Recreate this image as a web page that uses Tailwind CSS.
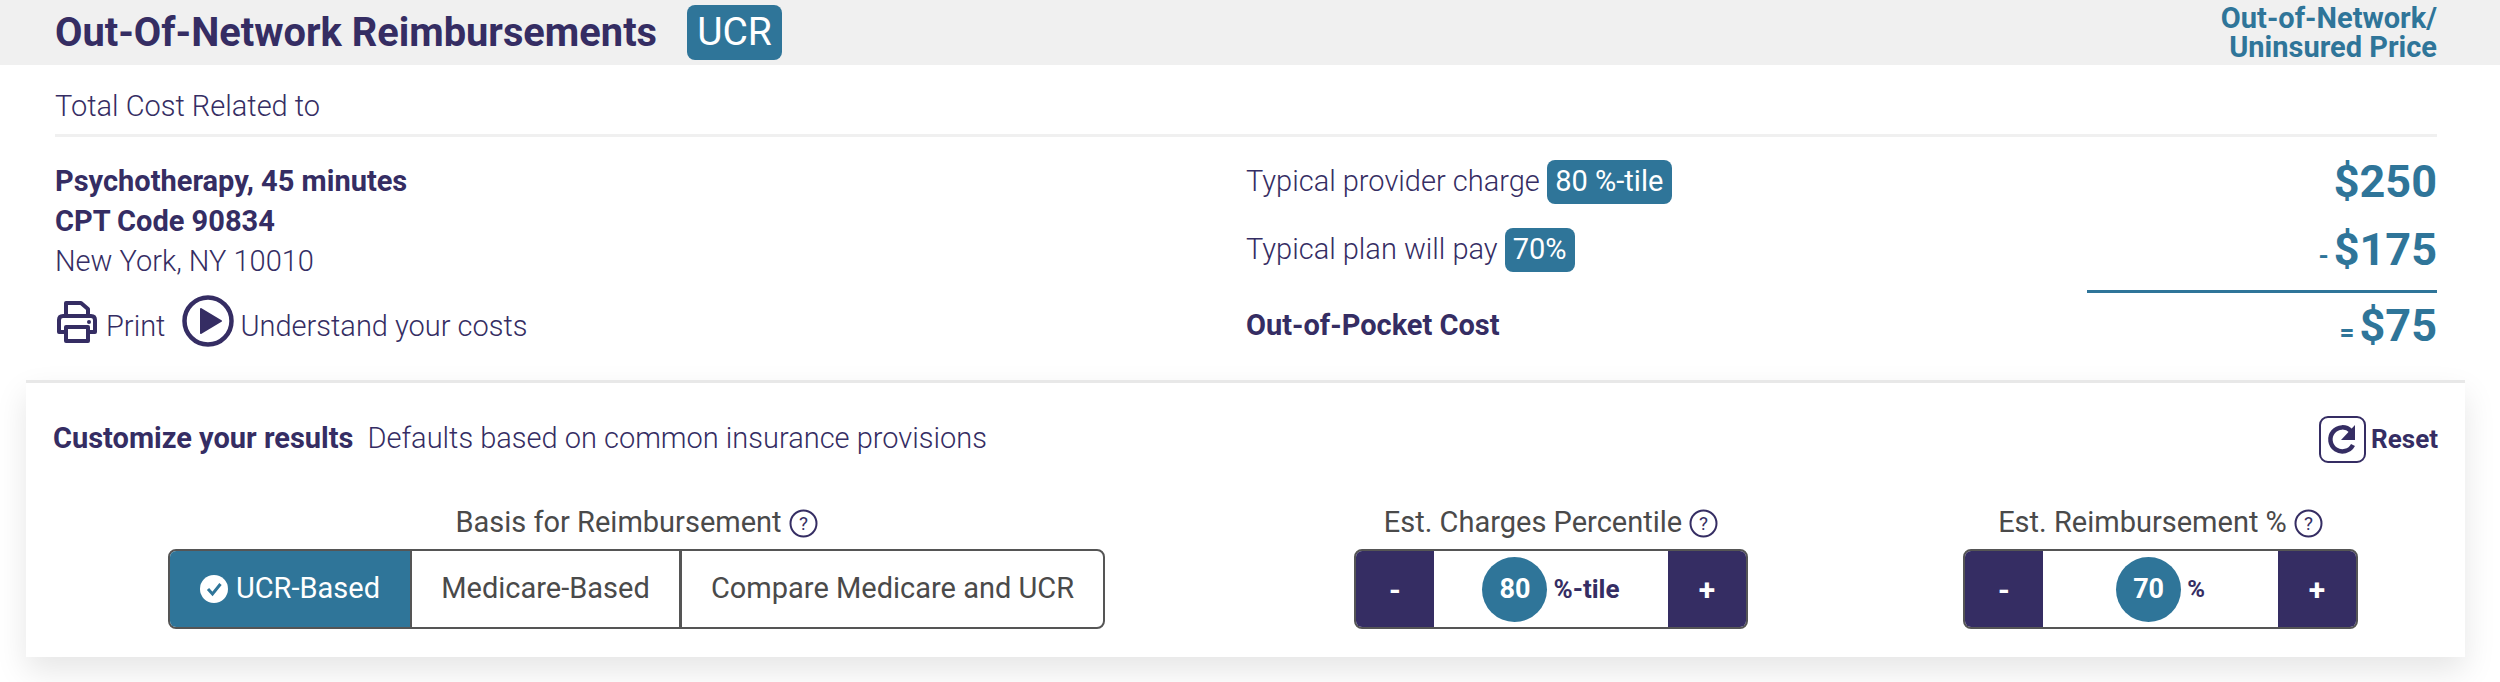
<!DOCTYPE html>
<html lang="en">
  <head>
    <meta charset="UTF-8" />
    <title>Out-Of-Network Reimbursements</title>
    <script src="https://cdn.jsdelivr.net/npm/@tailwindcss/browser@4"></script>
  </head>
  <body class="bg-white font-['Roboto',sans-serif] text-[#352d63] overflow-hidden">
    <!-- header bar -->
    <div class="h-[65px] bg-[#f0f0f0] pl-[55px] pr-[63px] flex items-center justify-between">
      <div class="flex items-center">
        <h1 class="text-[39.8px] leading-none font-bold">Out-Of-Network Reimbursements</h1>
        <span class="ml-[30px] w-[95px] h-[55px] bg-[#2f7599] text-white text-[39px] rounded-lg flex items-center justify-center">UCR</span>
      </div>
      <div class="text-[#2f7599] text-[29px] leading-[29px] font-bold text-right">Out-of-Network/<br />Uninsured Price</div>
    </div>

    <div class="pl-[55px] pr-[63px]">
      <div class="h-[72px] border-b-[3px] border-[#f0f0f0] text-[29px] font-light flex items-center pt-[14px]">Total Cost Related to</div>
      <div class="flex">
        <!-- procedure -->
        <div class="w-[1191px] pt-[24px]">
          <div class="text-[29px] leading-[40px] font-bold">Psychotherapy, 45 minutes</div>
          <div class="text-[29px] leading-[40px] font-bold">CPT Code 90834</div>
          <div class="text-[29px] leading-[40px] font-light">New York, NY 10010</div>
          <div class="flex items-center mt-[20px] text-[29px] font-light">
            <svg class="w-[44px] h-[44px] -translate-y-[6px]" viewBox="0 0 44 44" fill="none" stroke="#352d63" stroke-width="4" stroke-linejoin="round">
              <path d="M11 17V4h15l7 6v7" />
              <path d="M11 33H4V21q0-4 4-4h28q4 0 4 4v12h-7" />
              <path d="M11 28h22v14H11z" />
              <circle cx="34" cy="23" r="2" fill="#352d63" stroke="none" />
            </svg>
            <span class="ml-[7px]">Print</span>
            <svg class="ml-[17px] w-[52px] h-[52px] -translate-y-[6px]" viewBox="0 0 52 52" fill="none">
              <circle cx="26" cy="26" r="23.5" stroke="#352d63" stroke-width="4.500" />
              <path d="M19 14l20 12-20 12z" fill="#352d63" stroke="#352d63" stroke-width="2" stroke-linejoin="round" />
            </svg>
            <span class="ml-[6px]">Understand your costs</span>
          </div>
        </div>
        <!-- costs -->
        <div class="flex-1 pt-[23px]">
          <div class="h-[44px] flex items-center justify-between">
            <div class="flex items-center text-[29px] font-light">Typical provider charge
              <span class="ml-[7px] w-[125px] h-[44px] bg-[#2f7599] text-white text-[29px] font-normal rounded-lg flex items-center justify-center">80 %-tile</span>
            </div>
            <span class="text-[#2f7599] text-[45px] font-bold">$250</span>
          </div>
          <div class="h-[44px] mt-[24px] flex items-center justify-between">
            <div class="flex items-center text-[29px] font-light">Typical plan will pay
              <span class="ml-[7px] w-[70px] h-[44px] bg-[#2f7599] text-white text-[29px] font-normal rounded-lg flex items-center justify-center">70%</span>
            </div>
            <span class="text-[#2f7599] text-[45px] font-bold"><span class="text-[26px] mr-[5px]">-</span>$175</span>
          </div>
          <div class="ml-auto mt-[18px] w-[350px] h-[3px] bg-[#2f7599]"></div>
          <div class="h-[44px] mt-[11px] flex items-center justify-between">
            <span class="text-[29px] font-bold">Out-of-Pocket Cost</span>
            <span class="text-[#2f7599] text-[45px] font-bold"><span class="text-[26px] mr-[5px]">=</span>$75</span>
          </div>
        </div>
      </div>
    </div>

    <!-- customize panel -->
    <div class="absolute left-[26px] top-[380px] w-[2439px] h-[277px] border-t-[3px] border-[#e8e8e8] shadow-[0_14px_30px_rgba(0,0,0,0.1)] bg-white">
      <div class="h-[90px] pl-[27px] pr-[27px] pt-[22px] flex items-center justify-between">
        <div class="text-[29px]"><span class="font-bold">Customize your results</span><span class="ml-[14px] font-light">Defaults based on common insurance provisions</span></div>
        <div class="flex items-center">
          <svg class="w-[47px] h-[47px]" viewBox="0 0 47 47" fill="none">
            <rect x="1" y="1" width="45" height="45" rx="8" stroke="#352d63" stroke-width="2" />
            <path d="M32 15a12 12 0 1 0 2 14" stroke="#352d63" stroke-width="4.500" />
            <path d="M36 9v15H22z" fill="#352d63" />
          </svg>
          <span class="ml-[5px] text-[26px] font-bold">Reset</span>
        </div>
      </div>
      <div class="pl-[142px] flex">
        <div class="w-[937px] flex flex-col items-center">
          <div class="h-[76px] pt-[24px] flex items-center text-[29px] text-[#4a4a4a]">Basis for Reimbursement
            <svg class="ml-[7px] w-[29px] h-[29px]" viewBox="0 0 29 29" fill="none"><circle cx="14.5" cy="14.5" r="13" stroke="#352d63" stroke-width="2" /><text x="14.5" y="21" text-anchor="middle" font-size="19" fill="#352d63">?</text></svg>
          </div>
          <div class="w-full h-[80px] flex border-2 border-[#555] rounded-lg overflow-hidden text-[29px] text-[#4a4a4a]">
            <div class="w-[240px] bg-[#2f7599] text-white flex items-center justify-center">
              <svg class="w-[28px] h-[28px] mr-[8px]" viewBox="0 0 28 28"><circle cx="14" cy="14" r="14" fill="#fff" /><path d="M8 14l4.500 5 8-10" fill="none" stroke="#2f7599" stroke-width="3" /></svg>
              UCR-Based
            </div>
            <div class="w-[269px] border-l-2 border-[#555] flex items-center justify-center">Medicare-Based</div>
            <div class="flex-1 border-l-[3px] border-[#555] flex items-center justify-center">Compare Medicare and UCR</div>
          </div>
        </div>
        <div class="ml-[249px] w-[394px] flex flex-col items-center">
          <div class="h-[76px] pt-[24px] flex items-center text-[29px] text-[#4a4a4a]">Est. Charges Percentile
            <svg class="ml-[7px] w-[29px] h-[29px]" viewBox="0 0 29 29" fill="none"><circle cx="14.5" cy="14.5" r="13" stroke="#352d63" stroke-width="2" /><text x="14.5" y="21" text-anchor="middle" font-size="19" fill="#352d63">?</text></svg>
          </div>
          <div class="w-full h-[80px] flex border-2 border-[#555] rounded-lg overflow-hidden">
            <div class="w-[78px] bg-[#352d63] text-white text-[30px] font-bold flex items-center justify-center">-</div>
            <div class="flex-1 flex items-center justify-center">
              <span class="w-[65px] h-[65px] rounded-full bg-[#2f7599] text-white text-[27px] font-bold flex items-center justify-center">80</span>
              <span class="ml-[6px] text-[26px] font-bold">%-tile</span>
            </div>
            <div class="w-[78px] bg-[#352d63] text-white text-[30px] font-bold flex items-center justify-center">+</div>
          </div>
        </div>
        <div class="ml-[215px] w-[395px] flex flex-col items-center">
          <div class="h-[76px] pt-[24px] flex items-center text-[29px] text-[#4a4a4a]">Est. Reimbursement %
            <svg class="ml-[7px] w-[29px] h-[29px]" viewBox="0 0 29 29" fill="none"><circle cx="14.5" cy="14.5" r="13" stroke="#352d63" stroke-width="2" /><text x="14.5" y="21" text-anchor="middle" font-size="19" fill="#352d63">?</text></svg>
          </div>
          <div class="w-full h-[80px] flex border-2 border-[#555] rounded-lg overflow-hidden">
            <div class="w-[78px] bg-[#352d63] text-white text-[30px] font-bold flex items-center justify-center">-</div>
            <div class="flex-1 flex items-center justify-center">
              <span class="w-[65px] h-[65px] rounded-full bg-[#2f7599] text-white text-[27px] font-bold flex items-center justify-center">70</span>
              <span class="ml-[6px] text-[24px] font-bold">%</span>
            </div>
            <div class="w-[78px] bg-[#352d63] text-white text-[30px] font-bold flex items-center justify-center">+</div>
          </div>
        </div>
      </div>
    </div>
  </body>
</html>
